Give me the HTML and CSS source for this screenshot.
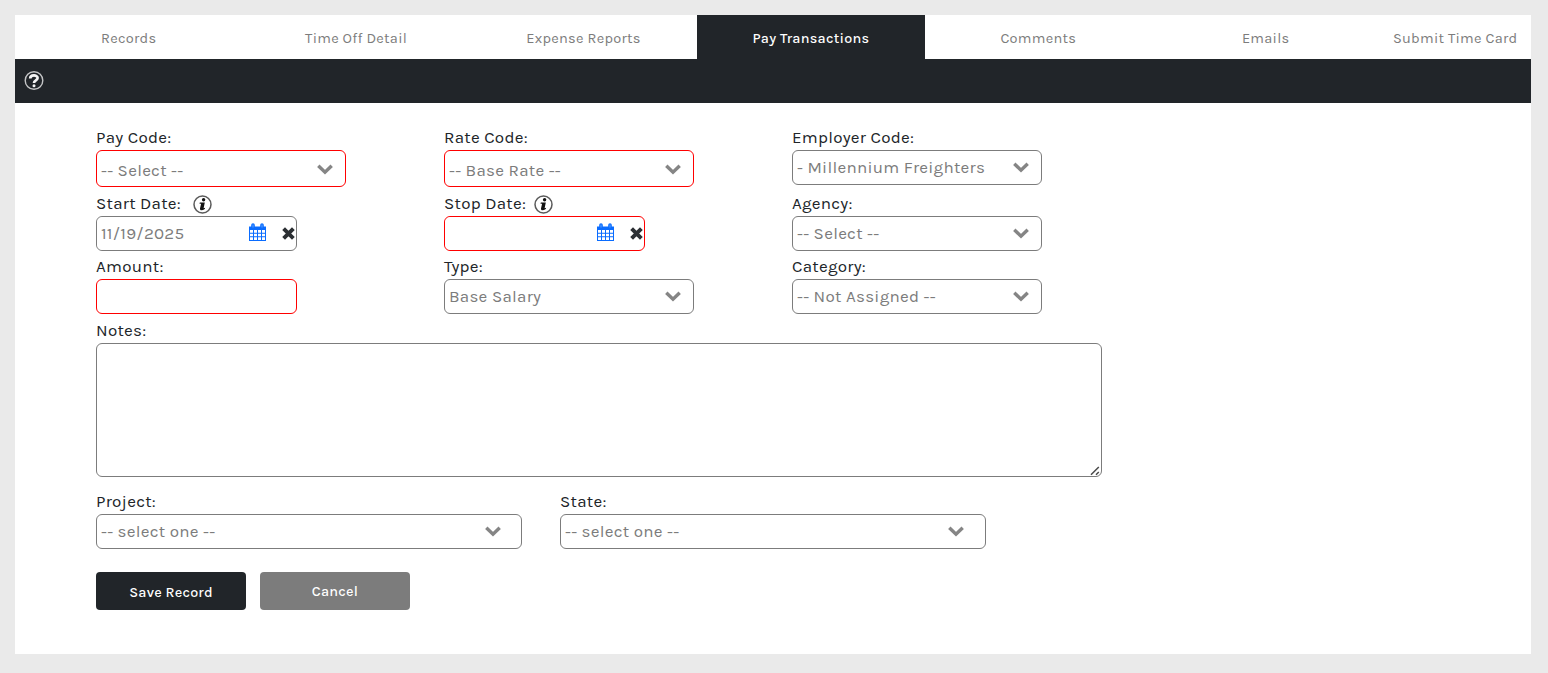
FILE: index.html
```
<!DOCTYPE html>
<html lang="en">
<head>
<meta charset="utf-8">
<title>Pay Transactions</title>
<link rel="stylesheet" href="styles.css">
</head>

<body>

<svg class="sprite" width="0" height="0">
  <symbol id="chevron" viewBox="0 0 16 11">
    <path d="M1.3 1.7 L8 8.2 L14.7 1.7" fill="none" stroke="#858585" stroke-width="3.4"/>
  </symbol>
  <symbol id="calendar" viewBox="0 0 17 18">
    <path d="M0 3.5h17V18H0z" fill="#0a6cff"/>
    <path d="M2.2 2a1.8 1.8 0 0 1 3.6 0v3.5H2.2zM11.2 2a1.8 1.8 0 0 1 3.6 0v3.5h-3.6z" fill="#0a6cff"/>
    <path d="M4 1.5v3M13 1.5v3" stroke="#5aa2ff" stroke-width="1"/>
    <path d="M1 7h3v2.7H1zM5 7h3v2.7H5zM9 7h3v2.7H9zM13 7h3v2.7h-3zM1 10.7h3v2.6H1zM5 10.7h3v2.6H5zM9 10.7h3v2.6H9zM13 10.7h3v2.6h-3zM1 14.3h3V17H1zM5 14.3h3V17H5zM9 14.3h3V17H9zM13 14.3h3V17h-3z" fill="#fff"/>
  </symbol>
  <symbol id="clear" viewBox="0 0 12 12">
    <path d="M1.5 1.5 L10.5 10.5 M10.5 1.5 L1.5 10.5" stroke="#2b2f33" stroke-width="3.6"/>
  </symbol>
  <symbol id="info" viewBox="0 0 19 19">
    <circle cx="9.5" cy="9.5" r="8.5" fill="#fff" stroke="#5a5a5a" stroke-width="1.5"/>
    <circle cx="10.6" cy="4.8" r="1.7" fill="#111"/>
    <path d="M6.8 7.4h5l-1.2 5.8 1.5-.5-.3 1.3q-2 1.4-4 1.2-1.1-.3-.8-1.6l1.1-4.9H6.5z" fill="#111"/>
  </symbol>
</svg>

<div class="page">
  <nav class="tabs">
    <a class="tab">Records</a>
    <a class="tab">Time Off Detail</a>
    <a class="tab">Expense Reports</a>
    <a class="tab active">Pay Transactions</a>
    <a class="tab">Comments</a>
    <a class="tab">Emails</a>
    <a class="tab last">Submit Time Card</a>
  </nav>

  <div class="toolbar">
    <svg width="20" height="20" viewBox="0 0 20 20">
      <circle cx="10" cy="9.5" r="8.8" fill="none" stroke="#c4c5c6" stroke-width="1.4"/>
      <path d="M6.2 7.6C6.2 3.4 13.6 3.6 13.6 7c0 2.5-3.6 2.2-3.6 5" fill="none" stroke="#f4f4f4" stroke-width="2.7"/>
      <circle cx="10" cy="14.8" r="1.5" fill="#f4f4f4"/>
    </svg>
  </div>

  <form class="form">
    <div class="row">
      <div class="col">
        <label for="payCode">Pay Code:</label>
        <div class="select tall">
          <select id="payCode" class="required"><option>-- Select --</option></select>
          <svg class="chevron"><use href="#chevron"/></svg>
        </div>
      </div>
      <div class="col">
        <label for="rateCode">Rate Code:</label>
        <div class="select tall">
          <select id="rateCode" class="required"><option>-- Base Rate --</option></select>
          <svg class="chevron"><use href="#chevron"/></svg>
        </div>
      </div>
      <div class="col">
        <label for="employer">Employer Code:</label>
        <div class="select">
          <select id="employer"><option>- Millennium Freighters</option></select>
          <svg class="chevron"><use href="#chevron"/></svg>
        </div>
      </div>
    </div>

    <div class="row">
      <div class="col">
        <label for="startDate" class="start">Start Date: <svg class="info"><use href="#info"/></svg></label>
        <div class="date">
          <input id="startDate" type="text" value="11/19/2025">
          <svg class="calendar"><use href="#calendar"/></svg>
          <svg class="clear"><use href="#clear"/></svg>
        </div>
      </div>
      <div class="col">
        <label for="stopDate">Stop Date: <svg class="info"><use href="#info"/></svg></label>
        <div class="date required">
          <input id="stopDate" type="text">
          <svg class="calendar"><use href="#calendar"/></svg>
          <svg class="clear"><use href="#clear"/></svg>
        </div>
      </div>
      <div class="col">
        <label for="agency">Agency:</label>
        <div class="select">
          <select id="agency"><option>-- Select --</option></select>
          <svg class="chevron"><use href="#chevron"/></svg>
        </div>
      </div>
    </div>

    <div class="row">
      <div class="col">
        <label for="amount">Amount:</label>
        <input id="amount" type="text" class="amount required">
      </div>
      <div class="col">
        <label for="type">Type:</label>
        <div class="select">
          <select id="type"><option>Base Salary</option></select>
          <svg class="chevron"><use href="#chevron"/></svg>
        </div>
      </div>
      <div class="col">
        <label for="category">Category:</label>
        <div class="select">
          <select id="category"><option>-- Not Assigned --</option></select>
          <svg class="chevron"><use href="#chevron"/></svg>
        </div>
      </div>
    </div>

    <div class="row notes">
      <div class="col">
        <label for="notes">Notes:</label>
        <div class="area">
          <textarea id="notes"></textarea>
          <svg class="grip" viewBox="0 0 10 10">
            <path d="M1 8.8 L8.8 1 M6 8.8 L8.8 6" stroke="#4a4a4a" stroke-width="1.5"/>
          </svg>
        </div>
      </div>
    </div>

    <div class="row wide">
      <div class="col">
        <label for="project">Project:</label>
        <div class="select">
          <select id="project"><option>-- select one --</option></select>
          <svg class="chevron"><use href="#chevron"/></svg>
        </div>
      </div>
      <div class="col state">
        <label for="state">State:</label>
        <div class="select">
          <select id="state"><option>-- select one --</option></select>
          <svg class="chevron"><use href="#chevron"/></svg>
        </div>
      </div>
    </div>

    <div class="buttons">
      <button type="button" class="btn save">Save Record</button>
      <button type="button" class="btn cancel">Cancel</button>
    </div>
  </form>
</div>

</body>
</html>
```

FILE: styles.css
```
* {
  box-sizing: border-box;
}

body {
  margin: 0;
  padding: 15px 17px 0 15px;
  background: #eaeaea;
  color: #212529;
  font-family: Karla, Roboto, sans-serif;
  font-size: 17px;
  letter-spacing: 0.25px;
}

.sprite {
  position: absolute;
}

.page {
  height: 639px;
  background: #fff;
}

/* tabs */
.tabs {
  display: flex;
  height: 44px;
}

.tab {
  width: 227.4px;
  color: #7c7c7c;
  font-size: 14.6px;
  line-height: 47px;
  text-align: center;
}

.tab.active {
  background: #212529;
  color: #fff;
  font-weight: 500;
  font-size: 14.4px;
}

.tab.last {
  flex: 1;
  white-space: nowrap;
}

.toolbar {
  display: flex;
  align-items: center;
  height: 44px;
  padding-left: 9px;
  background: #212529;
}

/* form */
.form {
  padding: 22px 0 0 81px;
}

.row {
  display: flex;
  margin-bottom: 3px;
}

.row:first-child {
  margin-bottom: 4px;
}

.row:nth-child(3) {
  margin-bottom: 4px;
}

.row.notes {
  margin-bottom: 12px;
}

.col {
  width: 348px;
}

.wide .col {
  width: 464px;
}

label {
  display: flex;
  align-items: center;
  height: 25px;
  padding-bottom: 1px;
}

.info {
  width: 19px;
  height: 19px;
  margin: 3px 0 0 8px;
}

.start .info {
  margin-left: 12px;
}

.select {
  display: grid;
  align-items: center;
  width: 250px;
  height: 35px;
}

.select.tall {
  height: 37px;
}

.wide .select {
  width: 426px;
}

.select select,
.select .chevron {
  grid-area: 1 / 1;
}

select,
input,
textarea {
  border: 1px solid #7c7c7c;
  border-radius: 6px;
  background: #fff;
  color: #7c7c7c;
  font: inherit;
  letter-spacing: inherit;
}

select {
  appearance: none;
  width: 100%;
  height: 100%;
  padding: 0 4px 1px;
}

.tall select {
  padding-top: 4px;
}

.chevron {
  justify-self: end;
  width: 16px;
  height: 11px;
  margin-right: 13px;
  pointer-events: none;
}

.tall .chevron {
  margin-top: 2px;
}

.wide .chevron {
  margin-right: 21px;
}

.wide .state .chevron {
  margin-right: 22px;
}

.date {
  display: flex;
  align-items: center;
  width: 201px;
  height: 35px;
  border: 1px solid #7c7c7c;
  border-radius: 6px;
}

.date input {
  width: 152px;
  height: 100%;
  padding: 0 4px 1px;
  border: 0;
}

.calendar {
  width: 17px;
  height: 18px;
  margin-top: -3px;
}

.clear {
  width: 13px;
  height: 13px;
  margin-left: 16px;
}

.amount {
  display: block;
  width: 201px;
  height: 35px;
}

.required {
  border-color: #f00;
}

.area {
  display: grid;
  width: 1006px;
  height: 134px;
}

.area textarea,
.area .grip {
  grid-area: 1 / 1;
}

textarea {
  resize: none;
}

.grip {
  place-self: end;
  width: 10px;
  height: 10px;
  margin: 0 2px 1px 0;
}

.buttons {
  display: flex;
  gap: 14px;
  padding-top: 20px;
}

.btn {
  width: 150px;
  height: 38px;
  padding: 0;
  border: 0;
  border-radius: 4px;
  color: #fff;
  font: 500 14.4px Karla, Roboto, sans-serif;
  letter-spacing: 0.2px;
}

.save {
  padding-top: 2px;
  background: #212529;
}

.cancel {
  background: #7c7c7c;
}
```
